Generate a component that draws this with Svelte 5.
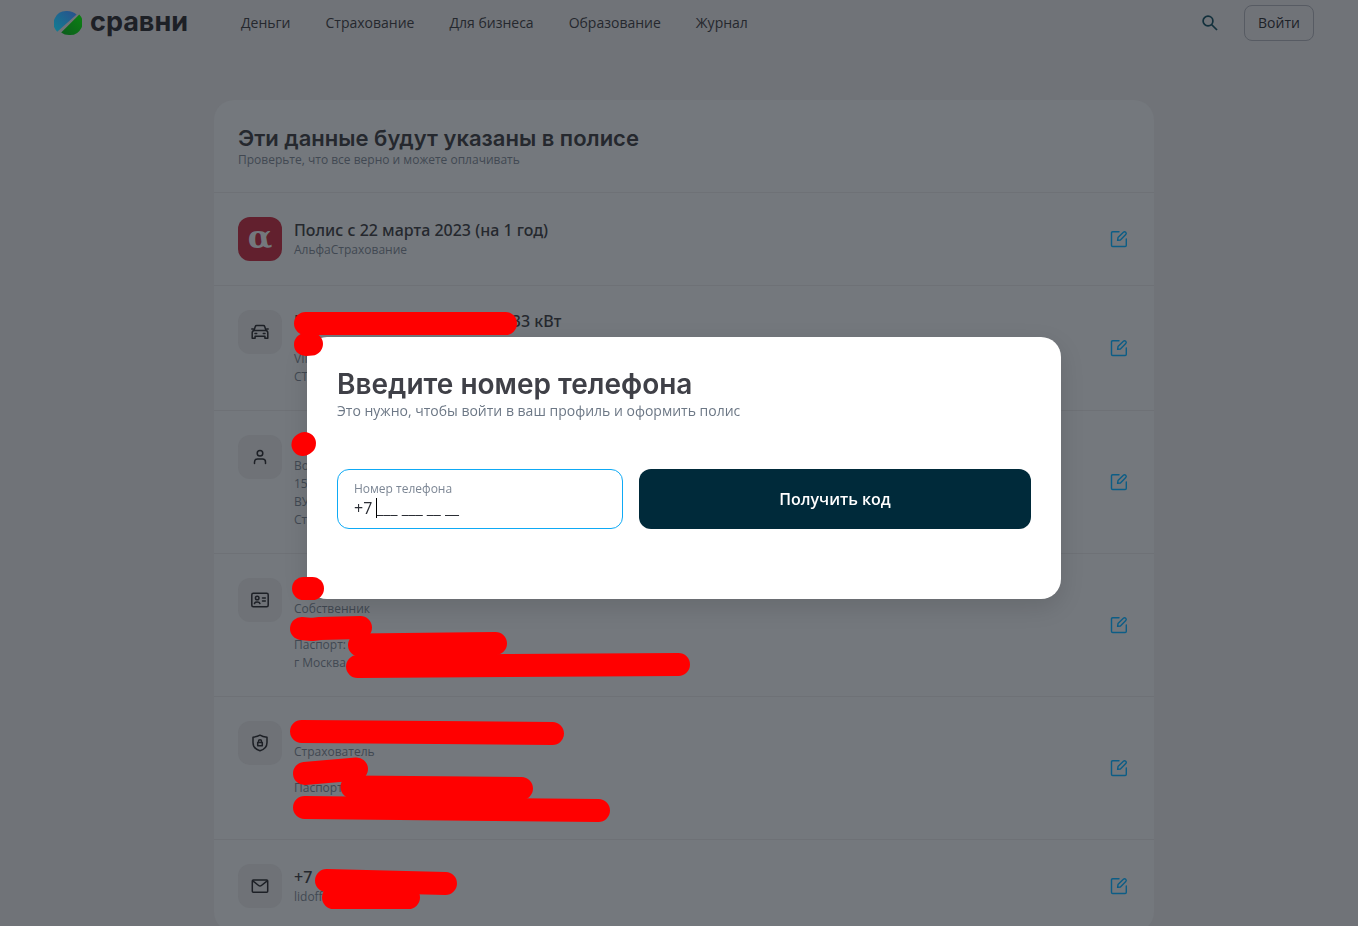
<script lang="ts">
  type Row = {
    id: string;
    icon: string;
    before?: string;
    gap?: number;
    after?: string;
    lines: string[];
  };

  const nav = ["Деньги", "Страхование", "Для бизнеса", "Образование", "Журнал"];

  const rows: Row[] = [
    { id: "policy", icon: "alpha", before: "Полис с 22 марта 2023 (на 1 год)", lines: ["АльфаСтрахование"] },
    { id: "car", icon: "car", before: "М", gap: 194, after: "133 кВт", lines: ["", "VIN", "СТС"] },
    { id: "driver", icon: "person", lines: ["Водитель", "15", "ВУ", "Стаж"] },
    { id: "owner", icon: "card", lines: ["Собственник", "", "Паспорт:", "г Москва"] },
    { id: "insurer", icon: "shield", lines: ["Страхователь", "", "Паспорт", ""] },
    { id: "contact", icon: "mail", before: "+7", lines: ["lidoff"] },
  ];

  // strokes that hide personal data
  const marks = [
    "M305.5 323.5H505.5",
    "M305.5 344.5L311.5 344",
    "M303 444.5L304.5 443.5",
    "M303.5 588.5H312.5",
    "M301.5 628.5L312 629.5L320 628.5L360.5 627.5",
    "M359.5 645L495.5 643.5",
    "M357.5 666.5L678.5 664.5",
    "M301.5 731.5L552.5 733.5",
    "M304.5 773.5L356.5 769",
    "M352 787L521.5 788.5",
    "M304.5 807.5L598.5 810.5",
    "M326.5 880.5L445.5 883.5",
    "M333.5 897.5H408.5",
  ];

  let phone = $state("+7 ___ ___ __ __");
</script>

<div class="page">
  <header class="top">
    <a class="logo" href="/">
      <svg width="28" height="26" viewBox="0 0 28 26" aria-hidden="true">
        <defs>
          <linearGradient id="blue" x1="0" y1="1" x2="1" y2="0">
            <stop offset="0" stop-color="#107f93" />
            <stop offset="1" stop-color="#2a4f8c" />
          </linearGradient>
          <linearGradient id="green" x1="0" y1="1" x2="1" y2="0">
            <stop offset="0" stop-color="#0c5c1d" />
            <stop offset="1" stop-color="#0c8212" />
          </linearGradient>
        </defs>
        <path d="M3.2 21.8A12.6 12.3 0 0 1 13 1c4 0 7 1.2 9.6 3.5Z" fill="url(#blue)" />
        <path d="M25.3 4.5A12.5 12.3 0 0 1 15 25c-3 0-5.6-.8-7.8-2.5Z" fill="url(#green)" />
      </svg>
      <span>сравни</span>
    </a>
    <nav>
      {#each nav as item}
        <a href="/">{item}</a>
      {/each}
    </nav>
    <button type="button" class="search" aria-label="Поиск">
      <svg width="16" height="16" viewBox="0 0 16 16" fill="none" stroke="currentColor" stroke-width="1.7">
        <circle cx="6" cy="6" r="4.9" />
        <path d="M9.5 9.5L15 15" />
      </svg>
    </button>
    <button type="button" class="login">Войти</button>
  </header>

  <main>
    <section class="card">
      <div class="card-head">
        <h1>Эти данные будут указаны в полисе</h1>
        <p>Проверьте, что все верно и можете оплачивать</p>
      </div>
      {#each rows as row (row.id)}
        <div class="row">
          <div class="tile" class:alpha={row.icon === "alpha"}>
            {#if row.icon === "alpha"}
              <span>α</span>
            {:else}
              <svg width="20" height="20" viewBox="0 0 20 20" fill="none" stroke="currentColor" stroke-width="1.5" stroke-linejoin="round" stroke-linecap="round" aria-hidden="true">
                {#if row.icon === "car"}
                  <path d="M4 8.5L5.3 4.4Q5.6 3.5 6.6 3.5H13.4Q14.4 3.5 14.7 4.4L16 8.5M4.5 8.5H15.5Q17.8 8.5 17.8 10.8V16.3H14.9V14.3H5.1V16.3H2.2V10.8Q2.2 8.5 4.5 8.5ZM1.8 7H3.3M16.7 7H18.2M5 11.5H6.7M13.3 11.5H15" />
                {:else if row.icon === "person"}
                  <circle cx="10" cy="6.2" r="2.8" />
                  <path d="M4.5 16.5V15Q4.5 12 7.5 12H12.5Q15.5 12 15.5 15V16.5" />
                {:else if row.icon === "card"}
                  <rect x="1.8" y="3.2" width="16.4" height="13.6" rx="1.5" />
                  <circle cx="7.2" cy="8" r="1.8" />
                  <path d="M4.5 13.5C4.9 11.5 9.5 11.5 9.9 13.5M12.5 8H15.3M12.5 11H15.3" />
                {:else if row.icon === "shield"}
                  <path d="M10 2.2C12.2 3.6 14.5 4 17 4.2V9.5C17 13.7 14 16.6 10 17.8C6 16.6 3 13.7 3 9.5V4.2C5.5 4 7.8 3.6 10 2.2Z" />
                  <path d="M7.7 9.5H12.3V12.7H7.7ZM8.5 9.3V8.3A1.5 1.5 0 0 1 11.5 8.3V9.3" />
                {:else}
                  <rect x="2.3" y="4" width="15.4" height="12.3" rx="1" />
                  <path d="M2.8 4.8L8.6 9.5Q10 10.6 11.4 9.5L17.2 4.8" />
                {/if}
              </svg>
            {/if}
          </div>
          <div class="info">
            <h2>{row.before ?? ""}{#if row.gap}<span class="gap" style:width="{row.gap}px"></span>{/if}{row.after ?? ""}</h2>
            {#each row.lines as line}
              <p>{line}</p>
            {/each}
          </div>
          <button type="button" class="edit" aria-label="Изменить">
            <svg width="18" height="18" viewBox="0 0 18 18" fill="none" stroke="currentColor" stroke-width="1.4" stroke-linejoin="round" stroke-linecap="round">
              <path d="M9 1.7H2.7Q1.5 1.7 1.5 2.9V15.3Q1.5 16.5 2.7 16.5H15.1Q16.3 16.5 16.3 15.3V9" />
              <path d="M7.6 10.4L8 7.6L13.4 2.2Q14.6 1.2 15.7 2.3Q16.8 3.4 15.8 4.6L10.4 10Z" />
            </svg>
          </button>
        </div>
      {/each}
    </section>

    <svg class="marks" viewBox="214 100 940 826" width="940" height="826" aria-hidden="true">
      {#each marks as d}
        <path {d} />
      {/each}
    </svg>
  </main>

  <div class="overlay">
    <form class="modal" role="dialog" aria-labelledby="phone-title" onsubmit={(e) => e.preventDefault()}>
      <h2 id="phone-title">Введите номер телефона</h2>
      <p>Это нужно, чтобы войти в ваш профиль и оформить полис</p>
      <div class="fields">
        <div class="field">
          <label for="phone">Номер телефона</label>
          <input id="phone" type="tel" bind:value={phone} />
          <span class="caret"></span>
        </div>
        <button type="submit">Получить код</button>
      </div>
    </form>
  </div>
</div>

<style>
  :global(body) {
    overflow: hidden;
    background: #707378;
  }

  .page {
    padding-left: 10px;
    font-family: "Open Sans", "Noto Sans", sans-serif;
    color: #25282e;
  }

  h1,
  h2,
  p {
    margin: 0;
  }

  button {
    font-family: inherit;
    cursor: pointer;
  }

  a {
    color: inherit;
    text-decoration: none;
  }

  .top {
    display: flex;
    align-items: center;
    max-width: 1260px;
    height: 46px;
    margin: 0 auto;
  }

  .logo {
    display: flex;
    align-items: center;
    gap: 8px;
    width: 187px;
    color: #1d2026;
    font-family: Inter, sans-serif;
    font-size: 27px;
    font-weight: 700;
    line-height: 32px;
  }

  .logo span {
    margin-top: -2px;
  }

  nav {
    display: flex;
    flex: 1;
    gap: 35px;
    font-size: 14px;
    line-height: 20px;
  }

  .search {
    display: flex;
    margin-right: 26px;
    padding: 0;
    border: 0;
    background: none;
    color: #12303c;
  }

  .login {
    width: 70px;
    height: 36px;
    padding: 0;
    border: 1px solid #575b63;
    border-radius: 8px;
    background: none;
    color: #1d2228;
    font-size: 14px;
    line-height: 20px;
  }

  main {
    position: relative;
    max-width: 940px;
    margin: 54px auto 0;
  }

  .card {
    border-radius: 20px;
    background: #74787d;
  }

  .card-head {
    padding: 24px;
  }

  .card-head h1 {
    font-family: Inter, sans-serif;
    font-size: 22px;
    font-weight: 600;
    line-height: 28px;
  }

  .card-head p {
    color: #414852;
    font-size: 12px;
    line-height: 16px;
  }

  .row {
    display: flex;
    align-items: center;
    gap: 12px;
    padding: 24px;
    border-top: 1px solid #6e7176;
  }

  .tile {
    display: flex;
    align-items: center;
    justify-content: center;
    align-self: flex-start;
    width: 44px;
    height: 44px;
    border-radius: 12px;
    background: #6f7277;
    color: #1d2026;
  }

  .tile.alpha {
    background: #62202e;
    color: #74787d;
    font-family: "DejaVu Serif", serif;
    font-size: 32px;
    font-weight: 700;
    line-height: 40px;
  }

  .tile.alpha span {
    margin-top: -4px;
  }

  .info {
    flex: 1;
  }

  .info h2 {
    min-height: 22px;
    font-family: "Noto Sans", sans-serif;
    font-size: 16px;
    font-weight: 500;
    line-height: 22px;
  }

  .info p {
    min-height: 18px;
    color: #414852;
    font-size: 12px;
    line-height: 18px;
  }

  .gap {
    display: inline-block;
  }

  .edit {
    display: flex;
    margin-right: 2px;
    padding: 0;
    border: 0;
    background: none;
    color: #0c5d86;
  }

  .marks {
    position: absolute;
    z-index: 3;
    top: 0;
    left: 0;
    fill: none;
    stroke: #ff0000;
    stroke-width: 23px;
    stroke-linecap: round;
    stroke-linejoin: round;
    pointer-events: none;
  }

  .overlay {
    position: fixed;
    z-index: 2;
    inset: 0;
    display: flex;
    align-items: center;
    justify-content: center;
    padding: 10px 0 0 10px;
  }

  .modal {
    width: 100%;
    max-width: 694px;
    padding: 30px 30px 70px;
    border-radius: 20px;
    background: #fff;
    box-shadow: 0 8px 24px rgba(0, 0, 0, 0.12);
  }

  .modal h2 {
    color: #3f4047;
    font-family: Inter, sans-serif;
    font-size: 28px;
    font-weight: 600;
    line-height: 34px;
  }

  .modal p {
    color: #6d7886;
    font-size: 14px;
    line-height: 20px;
  }

  .fields {
    display: grid;
    grid-template-columns: 286fr 392fr;
    gap: 16px;
    margin-top: 48px;
  }

  .field {
    position: relative;
    display: flex;
    flex-direction: column;
    height: 60px;
    box-sizing: border-box;
    padding: 10px 16px;
    border: 1px solid #0eaaf5;
    border-radius: 12px;
  }

  .field label {
    color: #7c8694;
    font-size: 12px;
    line-height: 18px;
  }

  .field input {
    width: 100%;
    height: 20px;
    padding: 0;
    border: 0;
    outline: 0;
    background: none;
    color: #2b2e35;
    font-family: inherit;
    font-size: 16px;
    line-height: 20px;
  }

  .caret {
    position: absolute;
    top: 28px;
    left: 38px;
    width: 1px;
    height: 20px;
    background: #000;
  }

  .fields button {
    border: 0;
    border-radius: 12px;
    background: #002a3a;
    color: #fff;
    font-size: 16px;
    font-weight: 600;
  }
</style>
